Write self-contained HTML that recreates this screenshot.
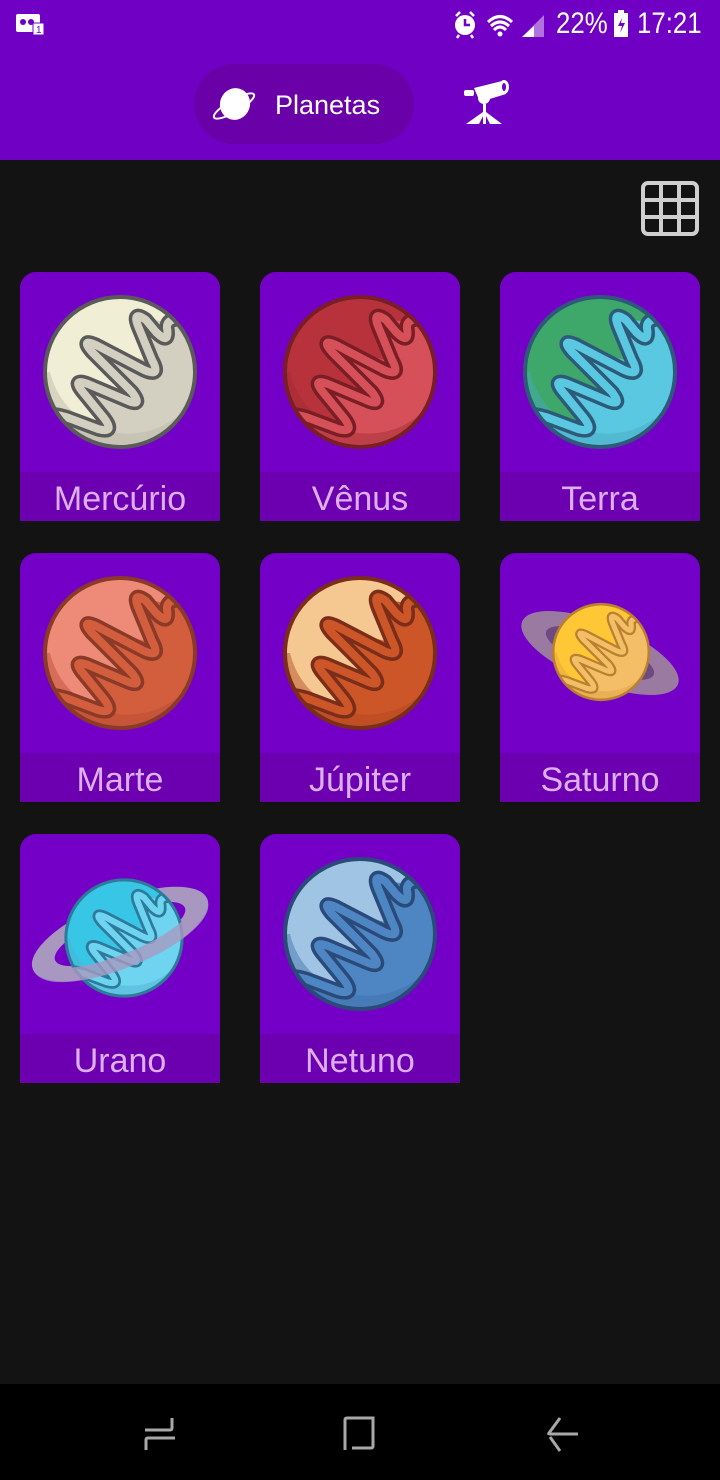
<!DOCTYPE html>
<html><head><meta charset="utf-8"><style>
*{margin:0;padding:0;box-sizing:border-box}
body{width:720px;height:1480px;background:#131313;font-family:"Liberation Sans",sans-serif;position:relative;overflow:hidden}
.top{position:absolute;left:0;top:0;width:720px;height:160px;background:#7000c4}
.pill{position:absolute;left:194px;top:64px;width:220px;height:80px;border-radius:40px;background:#6a00a8}
.pill span{position:absolute;left:81px;top:26px;color:#fff;font-size:27px}
.card{position:absolute;width:200px;height:249px;background:#7400c8;border-radius:16px 16px 0 0;overflow:hidden}
.card .lab{position:absolute;left:0;bottom:0;width:200px;height:49px;background:#6c00b0;color:#dcb0f0;font-size:34px;text-align:center;line-height:54px}
.card svg{position:absolute;left:0;top:0}
.nav{position:absolute;left:0;top:1384px;width:720px;height:96px;background:#000}
.st{position:absolute;top:7px;color:#fff;font-size:30px;transform:scaleX(.86);transform-origin:left top;white-space:nowrap}
</style></head><body>
<svg width="0" height="0" style="position:absolute">
<defs>
<clipPath id="cc"><circle cx="80" cy="80" r="76"/></clipPath>
<symbol id="pl" viewBox="0 0 160 160">
<circle cx="80" cy="80" r="76" fill="var(--d)"/>
<g clip-path="url(#cc)">
<path d="M0,0 L126,0 L126,30 L102,26 L112,70 L54,54 L92,101 L45,92 L64,128 L34,128 L20,160 L0,160Z" fill="var(--l)"/>
<path d="M4,80 A76,76 0 0 0 150,112 A80,80 0 0 1 10,80Z" fill="var(--s)" opacity="0.45"/>
<g id="wv" fill="none" stroke-linecap="round" stroke-linejoin="round">
<path d="M6,122 Q20,122 34,128 L58,137 Q76,142 64,126 L42,99 Q32,86 48,92 L86,108 Q104,116 92,100 L52,60 Q40,46 56,53 L104,78 Q122,86 112,68 L98,34 Q92,18 106,28 L116,40 Q130,54 127,36 Q126,24 150,28" stroke="var(--k)" stroke-width="15"/>
<path d="M6,122 Q20,122 34,128 L58,137 Q76,142 64,126 L42,99 Q32,86 48,92 L86,108 Q104,116 92,100 L52,60 Q40,46 56,53 L104,78 Q122,86 112,68 L98,34 Q92,18 106,28 L116,40 Q130,54 127,36 Q126,24 150,28" stroke="var(--d)" stroke-width="8"/>
</g>
</g>
<circle cx="80" cy="80" r="75" fill="none" stroke="var(--k)" stroke-width="4"/>
</symbol>
</defs></svg>

<div class="top">
<svg style="position:absolute;left:16px;top:12px" width="30" height="24"><rect x="0" y="2" width="24" height="18" rx="2" fill="#fff"/><circle cx="7" cy="10" r="3" fill="#7000c4"/><circle cx="15" cy="10" r="3" fill="#7000c4"/><rect x="17" y="11" width="11" height="12" fill="#fff" stroke="#7000c4"/><text x="20" y="21" font-size="10" fill="#7000c4" font-family="Liberation Sans">1</text></svg>
<svg style="position:absolute;left:452px;top:10px" width="100" height="30"><path d="M4,6 L8,2 M22,6 L18,2 M7,25 L5,28 M19,25 L21,28" stroke="#fff" stroke-width="2.5"/><circle cx="13" cy="15" r="10" fill="#fff"/><path d="M13,9 V15 H18" stroke="#7000c4" stroke-width="2.5" fill="none"/><path d="M36,12 Q48,1 60,12 M39,16 Q48,8 57,16 M42,20 Q48,14 54,20" stroke="#fff" stroke-width="3" fill="none"/><circle cx="48" cy="24" r="2.5" fill="#fff"/><path d="M70,27 L92,27 L92,5 Z" fill="#fff" opacity=".45"/><path d="M70,27 L82,27 L82,16 Z" fill="#fff"/></svg>
<div class="st" style="left:556px">22%</div>
<svg style="position:absolute;left:612px;top:10px" width="20" height="28"><rect x="2" y="3" width="14" height="24" fill="#fff"/><rect x="6" y="0" width="6" height="3" fill="#fff"/><path d="M10,8 L6,16 H10 L8,23 L13,13 H9Z" fill="#7000c4"/></svg>
<div class="st" style="left:637px">17:21</div>
<div class="pill">
<svg style="position:absolute;left:18px;top:20px" width="46" height="40"><ellipse cx="23" cy="20" rx="15" ry="16" fill="#fff" transform="rotate(20 23 20)"/><ellipse cx="22" cy="22" rx="23" ry="6" fill="none" stroke="#fff" stroke-width="2" transform="rotate(-30 22 22)"/></svg>
<span>Planetas</span></div>
<svg style="position:absolute;left:462px;top:80px" width="48" height="46"><rect x="2" y="10" width="10" height="6" rx="2" fill="#fff"/><path d="M12,8 L40,1 L44,14 L18,22 Z" fill="#fff"/><ellipse cx="42" cy="7" rx="5" ry="7" fill="#fff"/><ellipse cx="42" cy="7" rx="2" ry="4" fill="#7000c4"/><circle cx="22" cy="18" r="6" fill="#fff"/><path d="M21,24 L24,24 L24,32 L40,44 H28 L24,36 V44 H21 V36 L17,44 H4 L21,32Z" fill="#fff"/></svg>
</div>

<svg style="position:absolute;left:641px;top:181px" width="58" height="55"><rect x="2" y="2" width="54" height="51" rx="5" fill="none" stroke="#cfcfcf" stroke-width="4"/><path d="M2,19 H56 M2,36 H56 M20,2 V53 M38,2 V53" stroke="#cfcfcf" stroke-width="4"/></svg>

<div class="card" style="left:20px;top:272px"><svg width="200" height="200" viewBox="0 0 200 200"><use href="#pl" x="20" y="20" width="160" height="160" style="--l:#f0eed4;--d:#d3d0c2;--s:#b8b5a8;--k:#5a5a5a"/></svg><div class="lab">Mercúrio</div></div>
<div class="card" style="left:260px;top:272px"><svg width="200" height="200" viewBox="0 0 200 200"><use href="#pl" x="20" y="20" width="160" height="160" style="--l:#b8323c;--d:#d6505a;--s:#a02a34;--k:#7a1e26"/></svg><div class="lab">Vênus</div></div>
<div class="card" style="left:500px;top:272px"><svg width="200" height="200" viewBox="0 0 200 200"><use href="#pl" x="20" y="20" width="160" height="160" style="--l:#3ea86a;--d:#5ac8e0;--s:#48a8c0;--k:#2e5a7a"/></svg><div class="lab">Terra</div></div>

<div class="card" style="left:20px;top:553px"><svg width="200" height="200" viewBox="0 0 200 200"><use href="#pl" x="20" y="20" width="160" height="160" style="--l:#ee8a78;--d:#d25e3e;--s:#b84a30;--k:#8a3a26"/></svg><div class="lab">Marte</div></div>
<div class="card" style="left:260px;top:553px"><svg width="200" height="200" viewBox="0 0 200 200"><use href="#pl" x="20" y="20" width="160" height="160" style="--l:#f4c890;--d:#cc5628;--s:#b04420;--k:#7a2e1a"/></svg><div class="lab">Júpiter</div></div>
<div class="card" style="left:500px;top:553px"><svg width="200" height="200" viewBox="0 0 200 200"><ellipse cx="100" cy="100" rx="84" ry="30" fill="#9a7aa0" transform="rotate(22 100 100)"/><ellipse cx="100" cy="100" rx="58" ry="17" fill="#6e4a82" transform="rotate(22 100 100)"/><use href="#pl" x="50" y="48" width="102" height="102" style="--l:#ffc636;--d:#f4be66;--s:#e0a040;--k:#b88030"/></svg><div class="lab">Saturno</div></div>

<div class="card" style="left:20px;top:834px"><svg width="200" height="200" viewBox="0 0 200 200"><defs><clipPath id="fr"><rect x="0" y="100" width="200" height="120" transform="rotate(-22 100 100)"/></clipPath></defs><ellipse cx="100" cy="100" rx="94" ry="34" fill="#a898c0" transform="rotate(-22 100 100)"/><ellipse cx="100" cy="100" rx="70" ry="20" fill="#7400c8" transform="rotate(-22 100 100)"/><use href="#pl" x="42" y="42" width="124" height="124" style="--l:#38c6e6;--d:#6ed4f0;--s:#50b0d0;--k:#2e7a9a"/><g clip-path="url(#fr)"><ellipse cx="100" cy="100" rx="87" ry="27" fill="none" stroke="#a898c0" stroke-width="14" opacity=".8" transform="rotate(-22 100 100)"/></g></svg><div class="lab">Urano</div></div>
<div class="card" style="left:260px;top:834px"><svg width="200" height="200" viewBox="0 0 200 200"><use href="#pl" x="20" y="20" width="160" height="160" style="--l:#a0c4e4;--d:#4e86c4;--s:#3e6ea8;--k:#2a4a7a"/></svg><div class="lab">Netuno</div></div>

<div class="nav">
<svg style="position:absolute;left:140px;top:30px" width="40" height="40"><path d="M32,4 V14 Q32,16 30,16 H5 M35,24 H8 Q6,24 6,26 V36" stroke="#a8a8a8" stroke-width="3" fill="none"/></svg>
<svg style="position:absolute;left:340px;top:30px" width="40" height="40"><path d="M5,36 V6 Q5,4 7,4 H33 V32 Q33,34 31,34 H12" stroke="#a8a8a8" stroke-width="3" fill="none"/></svg>
<svg style="position:absolute;left:540px;top:30px" width="40" height="40"><path d="M20,4 L9,19 Q8,20 10,20 H38 M10,23 L20,37" stroke="#a8a8a8" stroke-width="3" fill="none"/></svg>
</div>
</body></html>
